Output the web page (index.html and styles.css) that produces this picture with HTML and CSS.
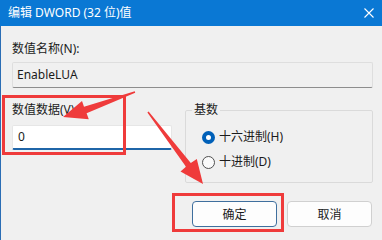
FILE: index.html
```html
<!DOCTYPE html>
<html lang="zh-CN">
<head>
<meta charset="utf-8">
<title>编辑 DWORD (32 位)值</title>
<link rel="stylesheet" href="styles.css">
</head>
<body>
<div class="dialog">
  <div class="titlebar">
    <span class="title">编辑 DWORD (32 位)值</span>
    <svg class="close" width="10" height="10" viewBox="0 0 10 10"><path d="M0.5 0.5 L9.5 9.5 M9.5 0.5 L0.5 9.5" stroke="#fff" stroke-width="1.1" fill="none"/></svg>
  </div>
  <div class="content">
    <div class="label">数值名称(N):</div>
    <div class="field readonly">EnableLUA</div>
    <div class="row">
      <div class="col-data">
        <div class="label">数值数据(V):</div>
        <div class="field input">0</div>
      </div>
      <fieldset class="group">
        <legend>基数</legend>
        <div class="radio checked"><span class="dot"></span>十六进制(H)</div>
        <div class="radio"><span class="dot"></span>十进制(D)</div>
      </fieldset>
    </div>
    <div class="buttons">
      <button class="btn default">确定</button>
      <button class="btn">取消</button>
    </div>
  </div>
  <svg class="annotations" width="382" height="240" viewBox="0 0 382 240">
    <rect x="3.5" y="96.5" width="121" height="57" fill="none" stroke="#ef3b3b" stroke-width="3"/>
    <rect x="173.5" y="194.5" width="109" height="36" fill="none" stroke="#ef3b3b" stroke-width="3"/>
    <polygon fill="#ef3b3b" points="135.2,92.7 86.6,113.2 88.8,119.3 63,117 82,101 84,106.8 134.8,91.3"/>
    <polygon fill="#ef3b3b" points="147.4,112.4 186,166.7 180.5,171.5 203,184 196.8,159 190.8,163.1 148.6,111.6"/>
  </svg>
</div>
</body>
</html>
```

FILE: styles.css
```css
* { box-sizing: border-box; }
html, body { margin: 0; padding: 0; }
body {
  width: 382px;
  height: 240px;
  overflow: hidden;
  background: #f0f0f0;
  font-family: "Noto Sans", "Noto Sans CJK SC", sans-serif;
  font-size: 12px;
  color: #1b1b1b;
}
.dialog {
  position: relative;
  width: 382px;
  height: 240px;
  background: #f0f0f0;
  border-left: 1px solid #2a6db5;
}
.titlebar {
  height: 26px;
  background: #0a78d4;
  color: #fff;
  display: flex;
  align-items: center;
  justify-content: space-between;
  padding: 0 8px 0 8px;
  margin-left: -1px;
}
.title { line-height: 16px; }
.close { display: block; }
.content {
  padding: 15px 9px 0 11px;
}
.label {
  line-height: 16px;
  height: 16px;
}
.field {
  line-height: 16px;
  display: flex;
  align-items: center;
}
.readonly {
  margin-top: 5px;
  height: 26px;
  padding-left: 4px;
  background: #f0f0f0;
  border: 1px solid #dedede;
  border-bottom-color: #8d8d8d;
  border-radius: 2px;
}
.row {
  display: flex;
  margin-top: 14px;
  gap: 13px;
}
.col-data {
  width: 160px;
  flex: none;
}
.input {
  margin-top: 7px;
  height: 25px;
  padding-left: 5px;
  background: #fff;
  border: 1px solid #e6e6e6;
  border-bottom: 2px solid #1f65a8;
  border-radius: 2px;
}
.group {
  flex: 1;
  margin: 0;
  padding: 11px 8px 12px 6px;
  border: 1px solid #dadada;
  border-radius: 2px;
  min-width: 0;
}
.group legend {
  padding: 0 2px;
  line-height: 16px;
}
.radio {
  display: flex;
  align-items: center;
  line-height: 16px;
  height: 16px;
  margin-left: 10px;
}
.radio + .radio { margin-top: 9px; }
.dot {
  width: 13px;
  height: 13px;
  border-radius: 50%;
  border: 1px solid #505050;
  background: #fafafa;
  margin-right: 4px;
  flex: none;
}
.checked .dot {
  border: 4.5px solid #0060b8;
  background: #fff;
}
.buttons {
  display: flex;
  justify-content: flex-end;
  gap: 10px;
  margin-top: 18px;
  padding-right: 1px;
}
.btn {
  width: 85px;
  height: 26px;
  font: inherit;
  color: #1b1b1b;
  background: #fdfdfd;
  border: 1px solid #d0d0d0;
  border-radius: 4px;
  padding: 0;
}
.btn.default {
  border-color: #3f6f9e;
}
.annotations {
  position: absolute;
  top: 0;
  left: -1px;
  pointer-events: none;
}
```
